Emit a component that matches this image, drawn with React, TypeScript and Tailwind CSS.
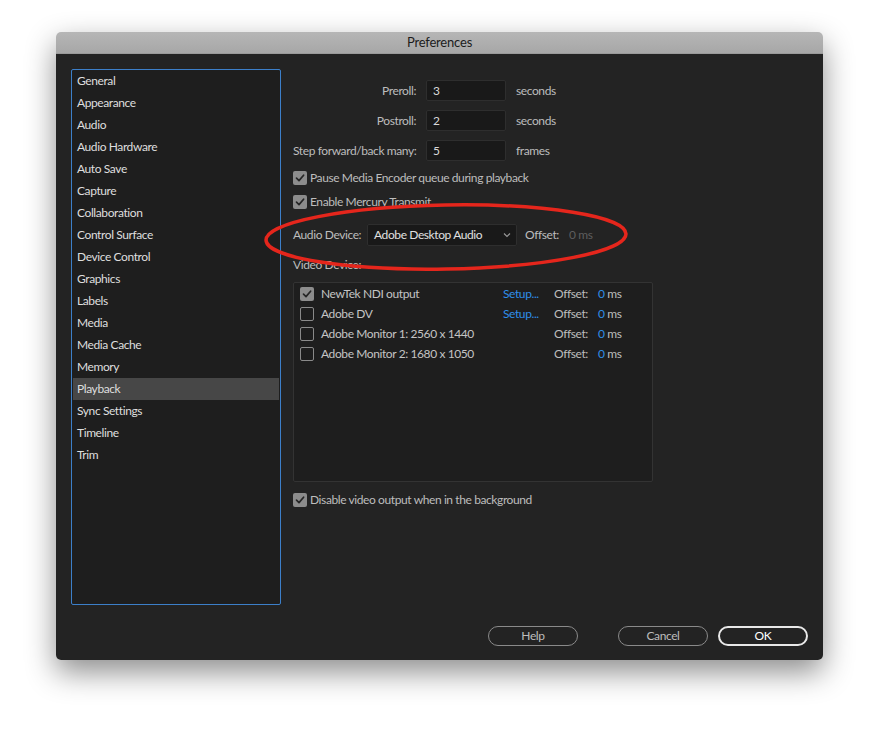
import React from "react";

const font = { fontFamily: "Lato, 'Noto Sans', sans-serif" };

function Check({ checked }: { checked: boolean }) {
  if (checked) {
    return (
      <span className="w-[14px] h-[14px] rounded-[2px] bg-[#8c8c8c] flex items-center justify-center shrink-0">
        <svg width="10" height="10" viewBox="0 0 10 10">
          <path d="M1.5 5.2 L4 7.6 L8.6 2.2" fill="none" stroke="#262626" strokeWidth="1.7" strokeLinecap="round" strokeLinejoin="round" />
        </svg>
      </span>
    );
  }
  return <span className="w-[14px] h-[14px] rounded-[2px] border-[1.5px] border-[#8a8a8a] shrink-0" />;
}

const sidebar = [
  "General",
  "Appearance",
  "Audio",
  "Audio Hardware",
  "Auto Save",
  "Capture",
  "Collaboration",
  "Control Surface",
  "Device Control",
  "Graphics",
  "Labels",
  "Media",
  "Media Cache",
  "Memory",
  "Playback",
  "Sync Settings",
  "Timeline",
  "Trim",
];

const videoDevices = [
  { name: "NewTek NDI output", checked: true, setup: true },
  { name: "Adobe DV", checked: false, setup: true },
  { name: "Adobe Monitor 1: 2560 x 1440", checked: false, setup: false },
  { name: "Adobe Monitor 2: 1680 x 1050", checked: false, setup: false },
];

export default function App() {
  return (
    <div className="w-[879px] h-[741px] bg-white pt-[32px] pl-[56px] relative overflow-hidden tracking-[-0.4px]" style={font}>
      <div className="w-[767px] h-[628px] rounded-[5px] overflow-hidden flex flex-col shadow-[0_12px_30px_rgba(0,0,0,0.45)]">
        <div className="h-[22px] bg-gradient-to-b from-[#b6b6b6] to-[#a7a7a7] flex items-center justify-center text-[13px] text-[#1c1c1c] border-b border-[#9a9a9a] tracking-[-0.2px]">
          Preferences
        </div>
        <div className="flex-1 bg-[#232323] relative flex flex-col">
          <div className="flex pt-[15px] pl-[15px]">
            <div className="w-[210px] h-[536px] rounded-[2px] border border-[#3c7fc9] bg-[#1e1e1e] px-[1px]">
              {sidebar.map((s) => (
                <div
                  key={s}
                  className={`h-[22px] flex items-center pl-[4px] text-[12px] text-[#dedede] ${s === "Playback" ? "bg-[#474747]" : ""}`}
                >
                  {s}
                </div>
              ))}
            </div>
            <div className="ml-[12px] pt-[11px] text-[12px] text-[#bdbdbd] whitespace-nowrap">
              <div className="grid grid-cols-[123px_80px_auto] gap-x-[10px] gap-y-[9px] items-center">
                <div className="text-right">Preroll:</div>
                <div className="h-[21px] bg-[#191919] border border-[#2e2e2e] rounded-[2px] flex items-center pl-[6px] text-[#d8d8d8]">3</div>
                <div>seconds</div>
                <div className="text-right">Postroll:</div>
                <div className="h-[21px] bg-[#191919] border border-[#2e2e2e] rounded-[2px] flex items-center pl-[6px] text-[#d8d8d8]">2</div>
                <div>seconds</div>
                <div className="text-right">Step forward/back many:</div>
                <div className="h-[21px] bg-[#191919] border border-[#2e2e2e] rounded-[2px] flex items-center pl-[6px] text-[#d8d8d8]">5</div>
                <div>frames</div>
              </div>
              <div className="mt-[10px] flex items-center gap-[3px] h-[14px]">
                <Check checked />
                <span>Pause Media Encoder queue during playback</span>
              </div>
              <div className="mt-[10px] flex items-center gap-[3px] h-[14px]">
                <Check checked />
                <span>Enable Mercury Transmit</span>
              </div>
              <div className="mt-[15px] flex items-center h-[22px]">
                <span className="w-[74px]">Audio Device:</span>
                <div className="w-[150px] h-[22px] bg-[#191919] border border-[#2e2e2e] rounded-[2px] flex items-center justify-between pl-[6px] pr-[5px] text-[#e0e0e0]">
                  <span>Adobe Desktop Audio</span>
                  <svg width="8" height="6" viewBox="0 0 8 6">
                    <path d="M1 1.5 L4 4.5 L7 1.5" fill="none" stroke="#9a9a9a" strokeWidth="1.1" />
                  </svg>
                </div>
                <span className="ml-[8px]">Offset:</span>
                <span className="ml-[10px] text-[#5e5e5e]">0 ms</span>
              </div>
              <div className="mt-[12px] h-[14px] flex items-center">Video Device:</div>
              <div className="mt-[10px] w-[360px] h-[200px] bg-[#1e1e1e] border border-[#333] rounded-[2px] pt-[1px]">
                {videoDevices.map((d) => (
                  <div key={d.name} className="h-[20px] flex items-center pl-[6px]">
                    <Check checked={d.checked} />
                    <span className="ml-[7px] w-[182px] text-[#c4c4c4]">{d.name}</span>
                    <span className="w-[51px] text-[#2f8ee9]">{d.setup ? "Setup..." : ""}</span>
                    <span className="w-[44px]">Offset:</span>
                    <span>
                      <span className="text-[#2f8ee9]">0</span> ms
                    </span>
                  </div>
                ))}
              </div>
              <div className="mt-[11px] flex items-center gap-[3px] h-[14px]">
                <Check checked />
                <span>Disable video output when in the background</span>
              </div>
            </div>
          </div>
          <div className="absolute left-[432px] top-[572px] flex text-[12px]">
            <button className="w-[90px] h-[20px] rounded-full border-[1.5px] border-[#8a8a8a] text-[#bdbdbd] flex items-center justify-center">Help</button>
            <button className="ml-[40px] w-[90px] h-[20px] rounded-full border-[1.5px] border-[#8a8a8a] text-[#bdbdbd] flex items-center justify-center">Cancel</button>
            <button className="ml-[10px] w-[90px] h-[20px] rounded-full border-2 border-[#e8e8e8] text-white flex items-center justify-center">OK</button>
          </div>
        </div>
      </div>
      <svg className="absolute left-0 top-0 pointer-events-none" width="879" height="741">
        <ellipse cx="446" cy="237" rx="180" ry="32" fill="none" stroke="#e5261c" strokeWidth="3.5" transform="rotate(-1 446 237)" />
      </svg>
    </div>
  );
}
